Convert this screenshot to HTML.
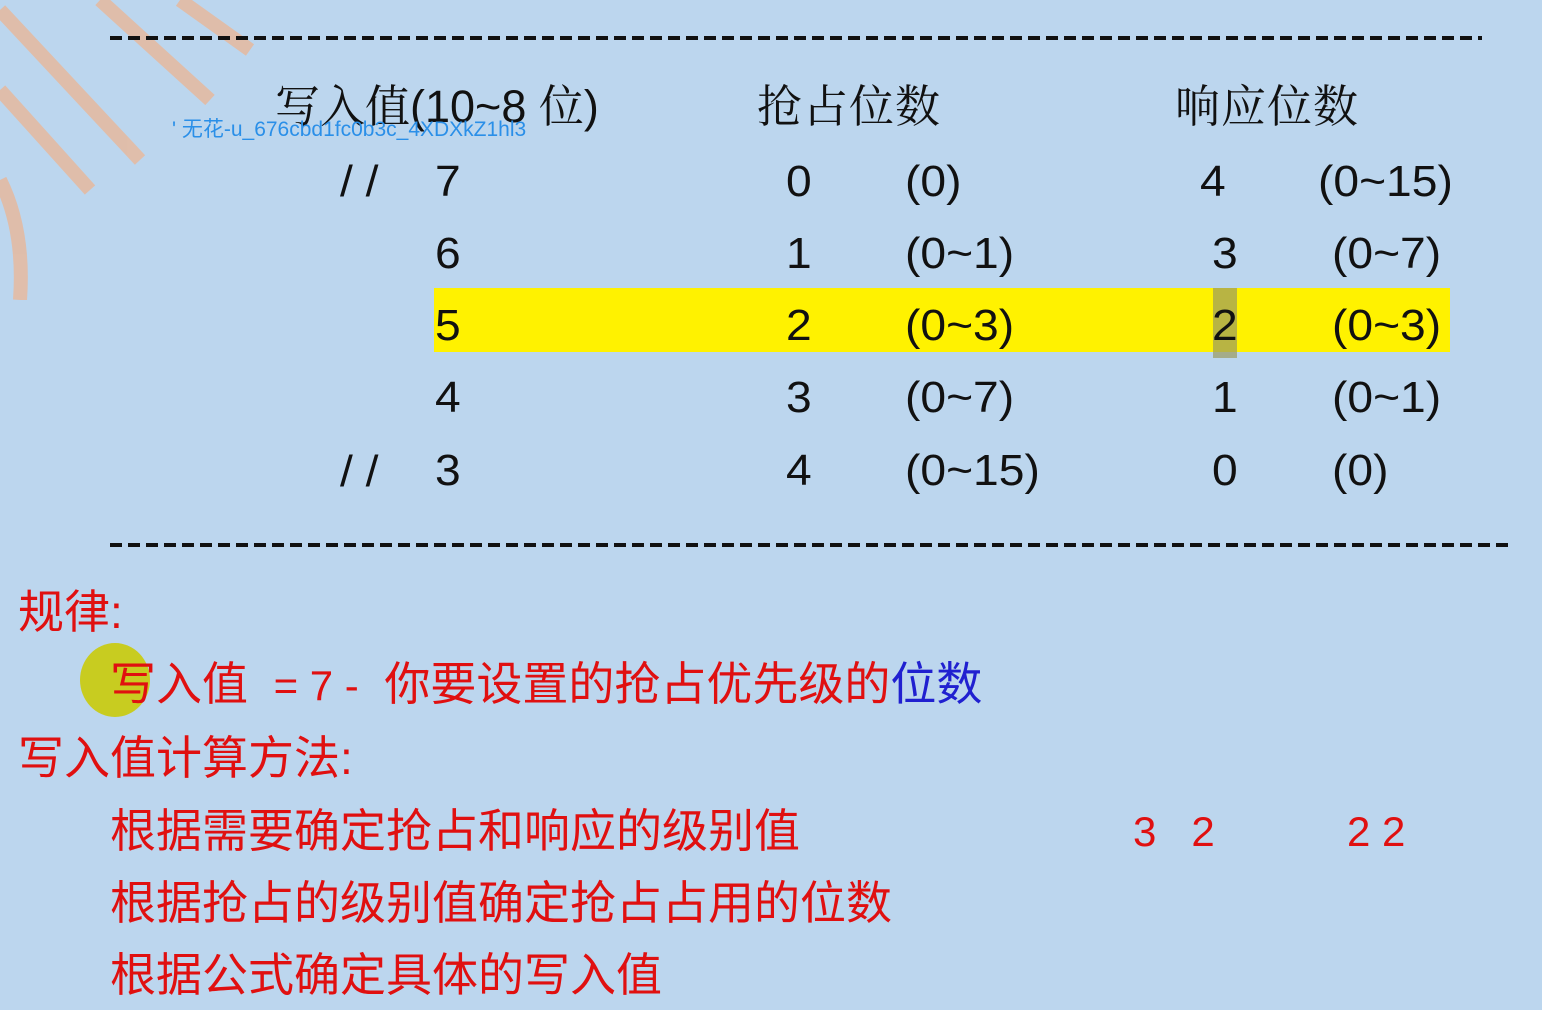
<!DOCTYPE html>
<html><head><meta charset="utf-8"><style>
body{margin:0;width:1542px;height:1010px;overflow:hidden;background:#bcd6ee;position:relative;font-family:"Liberation Sans","Noto Sans CJK SC",sans-serif}
.t{position:absolute;white-space:nowrap;line-height:1}
.k{color:#111;font-size:45px;font-family:"Liberation Sans","Noto Serif CJK SC",sans-serif}
.n{color:#111;font-size:44px;font-family:"Liberation Sans",sans-serif;transform:scaleX(1.05);transform-origin:left}
.r{color:#e01010;font-size:46px;font-family:"Liberation Sans","Noto Sans CJK SC",sans-serif}
.d{position:absolute;height:4px;background:repeating-linear-gradient(90deg,#111 0 12px,transparent 12px 18px)}
</style></head><body>
<svg style="position:absolute;left:0;top:0" width="300" height="300">
<g stroke="#e8b89a" stroke-width="14" fill="none" opacity=".8">
<line x1="0" y1="10" x2="140" y2="160"/><line x1="0" y1="90" x2="90" y2="190"/>
<line x1="100" y1="0" x2="210" y2="100"/><line x1="180" y1="0" x2="250" y2="50"/>
<path d="M0 180 Q25 230 20 300"/></g></svg>
<div class="d" style="left:110px;top:36px;width:1372px"></div>
<div class="d" style="left:110px;top:543px;width:1402px"></div>
<div style="position:absolute;left:434px;top:288px;width:1016px;height:64px;background:#fff200"></div>
<div style="position:absolute;left:1213px;top:288px;width:24px;height:70px;background:#9a9a60;opacity:.7"></div>
<div class="t k" style="left:275px;top:84px">写入值(10~8 位)</div>
<div class="t k" style="left:757px;top:84px;letter-spacing:1px">抢占位数</div>
<div class="t k" style="left:1175px;top:84px;letter-spacing:1px">响应位数</div>
<div class="t" style="left:172px;top:119px;color:#2a8fe8;font-size:21px">' 无花-u_676cbd1fc0b3c_4XDXkZ1hl3</div>
<div class="t n" style="left:340px;top:160px">/ /</div>
<div class="t n" style="left:340px;top:450px">/ /</div>
<div class="t n" style="left:435px;top:160px">7</div><div class="t n" style="left:786px;top:160px">0</div><div class="t n" style="left:905px;top:160px">(0)</div><div class="t n" style="left:1200px;top:160px">4</div><div class="t n" style="left:1318px;top:160px">(0~15)</div>
<div class="t n" style="left:435px;top:232px">6</div><div class="t n" style="left:786px;top:232px">1</div><div class="t n" style="left:905px;top:232px">(0~1)</div><div class="t n" style="left:1212px;top:232px">3</div><div class="t n" style="left:1332px;top:232px">(0~7)</div>
<div class="t n" style="left:435px;top:304px">5</div><div class="t n" style="left:786px;top:304px">2</div><div class="t n" style="left:905px;top:304px">(0~3)</div><div class="t n" style="left:1212px;top:304px">2</div><div class="t n" style="left:1332px;top:304px">(0~3)</div>
<div class="t n" style="left:435px;top:376px">4</div><div class="t n" style="left:786px;top:376px">3</div><div class="t n" style="left:905px;top:376px">(0~7)</div><div class="t n" style="left:1212px;top:376px">1</div><div class="t n" style="left:1332px;top:376px">(0~1)</div>
<div class="t n" style="left:435px;top:449px">3</div><div class="t n" style="left:786px;top:449px">4</div><div class="t n" style="left:905px;top:449px">(0~15)</div><div class="t n" style="left:1212px;top:449px">0</div><div class="t n" style="left:1332px;top:449px">(0)</div>
<div class="t r" style="left:18px;top:589px">规律:</div>
<div style="position:absolute;left:80px;top:643px;width:70px;height:74px;border-radius:50%;background:#c8cc20"></div>
<div class="t r" style="left:110px;top:661px">写入值 &nbsp;<span style="font-size:42px">= 7 -</span>&nbsp; 你要设置的抢占优先级的<span style="color:#2020d0">位数</span></div>
<div class="t r" style="left:18px;top:735px">写入值计算方法:</div>
<div class="t r" style="left:110px;top:808px">根据需要确定抢占和响应的级别值</div>
<div class="t r" style="left:1133px;top:811px;font-size:42px">3&nbsp;&nbsp;&nbsp;2</div>
<div class="t r" style="left:1347px;top:811px;font-size:42px">2 2</div>
<div class="t r" style="left:110px;top:880px">根据抢占的级别值确定抢占占用的位数</div>
<div class="t r" style="left:110px;top:952px">根据公式确定具体的写入值</div>
</body></html>
